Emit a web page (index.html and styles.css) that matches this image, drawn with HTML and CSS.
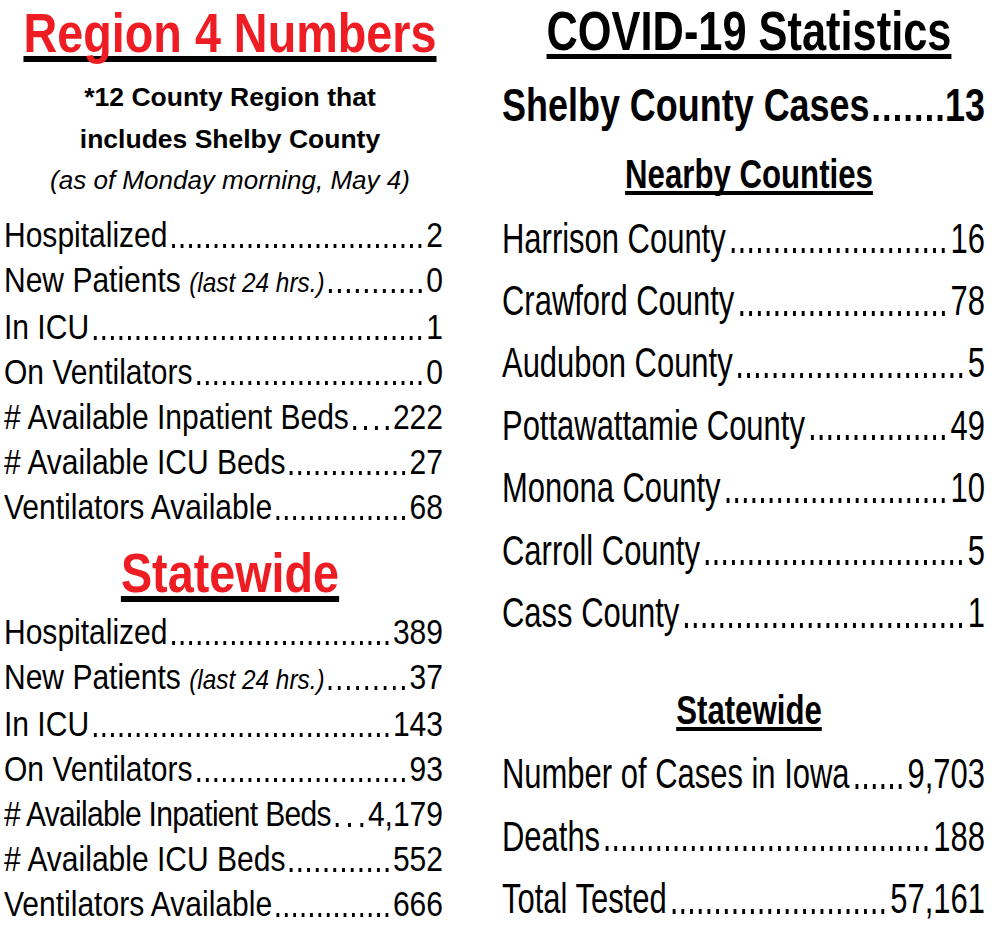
FILE: index.html
```html
<!DOCTYPE html>
<html lang="en">
<head>
<meta charset="utf-8">
<title>Region 4 Numbers / COVID-19 Statistics</title>
<link rel="stylesheet" href="styles.css">
</head>
<body>
<div class="page">
  <section class="col col-left">
    <h1 class="sq title red region">Region 4 Numbers</h1>
    <p class="sub">*12 County Region that<br>includes Shelby County</p>
    <p class="asof">(as of Monday morning, May 4)</p>
    <ul class="sq rows rows-left">
      <li class="row"><span class="lbl">Hospitalized</span><span class="lead"></span><span class="val">2</span></li>
      <li class="row"><span class="lbl">New Patients <i class="note">(last 24 hrs.)</i></span><span class="lead"></span><span class="val">0</span></li>
      <li class="row"><span class="lbl">In ICU</span><span class="lead"></span><span class="val">1</span></li>
      <li class="row"><span class="lbl">On Ventilators</span><span class="lead"></span><span class="val">0</span></li>
      <li class="row"><span class="lbl"># Available Inpatient Beds</span><span class="lead"></span><span class="val">222</span></li>
      <li class="row"><span class="lbl"># Available ICU Beds</span><span class="lead"></span><span class="val">27</span></li>
      <li class="row"><span class="lbl">Ventilators Available</span><span class="lead"></span><span class="val">68</span></li>
    </ul>
    <h2 class="sq title red state-title">Statewide</h2>
    <ul class="sq rows rows-left rows-state">
      <li class="row"><span class="lbl">Hospitalized</span><span class="lead"></span><span class="val">389</span></li>
      <li class="row"><span class="lbl">New Patients <i class="note">(last 24 hrs.)</i></span><span class="lead"></span><span class="val">37</span></li>
      <li class="row"><span class="lbl">In ICU</span><span class="lead"></span><span class="val">143</span></li>
      <li class="row"><span class="lbl">On Ventilators</span><span class="lead"></span><span class="val">93</span></li>
      <li class="row"><span class="lbl tight"># Available Inpatient Beds</span><span class="lead"></span><span class="val">4,179</span></li>
      <li class="row"><span class="lbl"># Available ICU Beds</span><span class="lead"></span><span class="val">552</span></li>
      <li class="row"><span class="lbl">Ventilators Available</span><span class="lead"></span><span class="val">666</span></li>
    </ul>
  </section>

  <section class="col col-right">
    <h1 class="sq covid">COVID-19 Statistics</h1>
    <div class="sq row shelby"><span class="lbl">Shelby County Cases</span><span class="lead"></span><span class="val">13</span></div>
    <h2 class="sq subhead nearby">Nearby Counties</h2>
    <ul class="sq rows rows-right">
      <li class="row"><span class="lbl">Harrison County</span><span class="lead"></span><span class="val">16</span></li>
      <li class="row"><span class="lbl">Crawford County</span><span class="lead"></span><span class="val">78</span></li>
      <li class="row"><span class="lbl">Audubon County</span><span class="lead"></span><span class="val">5</span></li>
      <li class="row"><span class="lbl">Pottawattamie County</span><span class="lead"></span><span class="val">49</span></li>
      <li class="row"><span class="lbl">Monona County</span><span class="lead"></span><span class="val">10</span></li>
      <li class="row"><span class="lbl">Carroll County</span><span class="lead"></span><span class="val">5</span></li>
      <li class="row"><span class="lbl">Cass County</span><span class="lead"></span><span class="val">1</span></li>
    </ul>
    <h2 class="sq subhead state-sub">Statewide</h2>
    <ul class="sq rows rows-right rows-rstate">
      <li class="row"><span class="lbl">Number of Cases in Iowa</span><span class="lead"></span><span class="val">9,703</span></li>
      <li class="row"><span class="lbl">Deaths</span><span class="lead"></span><span class="val">188</span></li>
      <li class="row"><span class="lbl">Total Tested</span><span class="lead"></span><span class="val">57,161</span></li>
    </ul>
  </section>
</div>
</body>
</html>
```

FILE: styles.css
```css
* { box-sizing: border-box; }

html, body {
  margin: 0;
  padding: 0;
  background: #ffffff;
}

body {
  color: #000000;
  font-family: "Liberation Sans", Arial, Helvetica, sans-serif;
}

.page {
  display: flex;
  width: 1000px;
  height: 938px;
  overflow: hidden;
}

.col {
  display: flex;
  flex-direction: column;
  align-items: flex-start;
}

.col-left {
  margin-left: 4px;
  width: 452px;
  flex: none;
}

.col-right {
  margin-left: 46px;
  width: 494px;
  flex: none;
}

h1, h2, p, ul {
  margin: 0;
  padding: 0;
}

ul { list-style: none; }

/* Condensed type: the regular face is drawn narrower, like Helvetica Condensed.
   --k is the horizontal squeeze, --w the width the block occupies on the page. */
.sq {
  flex: none;
  width: calc(var(--w) / var(--k));
  transform: scaleX(var(--k));
  transform-origin: 0 0;
}

/* ---------- headings ---------- */
.title {
  --k: 0.85;
  --w: 452px;
  font-weight: 700;
  font-size: 55px;
  line-height: 64px;
  text-align: center;
  text-decoration: underline;
  text-decoration-color: #000000;
  text-decoration-thickness: 6px;
  text-underline-offset: 4px;
  text-decoration-skip-ink: none;
}

.red { color: #ee1d23; }

.region { margin-top: 1px; }
.state-title { margin-top: 11px; }

.sub {
  width: 452px;
  margin-top: 11px;
  font-weight: 700;
  font-size: 26.5px;
  line-height: 42px;
  text-align: center;
}

.asof {
  width: 452px;
  font-style: italic;
  font-size: 26px;
  line-height: 40px;
  text-align: center;
}

.covid {
  --k: 0.78;
  --w: 494px;
  font-weight: 700;
  font-size: 55.6px;
  line-height: 62px;
  text-align: center;
  text-decoration: underline;
  text-decoration-thickness: 5px;
  text-underline-offset: 4px;
  text-decoration-skip-ink: none;
}

.subhead {
  --k: 0.77;
  --w: 494px;
  font-weight: 700;
  font-size: 40.5px;
  line-height: 48px;
  text-align: center;
  text-decoration: underline;
  text-decoration-thickness: 4px;
  text-underline-offset: 3px;
  text-decoration-skip-ink: none;
}

.nearby { margin-top: 16.5px; }
.state-sub { margin-top: 43px; }

/* ---------- leader rows ---------- */
.row {
  display: flex;
  align-items: baseline;
  white-space: nowrap;
}

.lbl { flex: none; }

/* a label set a little tighter so its leader still has room */
.tight { letter-spacing: -0.8px; }

/* dot leader: whole square dots, each centred in a tile the width of a
   full stop; only whole tiles are drawn, any spare width goes between them.
   The dots sit on the text baseline (--dy is measured from the line top). */
.lead {
  flex: 1 1 0;
  align-self: stretch;
  min-width: 0;
  margin-left: var(--gap-l, 2px);
  margin-right: var(--gap-r, 2px);
  background-image: linear-gradient(90deg,
    transparent calc(50% - var(--dot) / 2),
    #000 calc(50% - var(--dot) / 2),
    #000 calc(50% + var(--dot) / 2),
    transparent calc(50% + var(--dot) / 2));
  background-size: var(--pitch) var(--dot);
  background-repeat: space no-repeat;
  background-position: 0 var(--dy);
}

.val { flex: none; }

.rows-left {
  --k: 0.87;
  --w: 439px;
  --dot: 3.6px;
  --pitch: 9.6px;
  --dy: 30.9px;
  margin-top: 12.75px;
}

.rows-left .row {
  font-size: 34.5px;
  line-height: 45px;
}

.rows-state { margin-top: 5.65px; }

.note {
  font-size: 28px;
  font-style: italic;
}

.shelby {
  --k: 0.77;
  --w: 483px;
  --dot: 6.2px;
  --pitch: 13px;
  --dy: 38px;
  --gap-l: 2px;
  --gap-r: 0px;
  margin-top: 15px;
  font-weight: 700;
  font-size: 46.7px;
  line-height: 56px;
}

.rows-right {
  --k: 0.72;
  --w: 483px;
  --dot: 4.5px;
  --pitch: 11.95px;
  --dy: 41.6px;
  --gap-l: 4px;
  --gap-r: 4px;
  margin-top: 9px;
}

.rows-right .row {
  font-size: 43px;
  line-height: 62.4px;
}

.rows-rstate { margin-top: 8px; }
```
